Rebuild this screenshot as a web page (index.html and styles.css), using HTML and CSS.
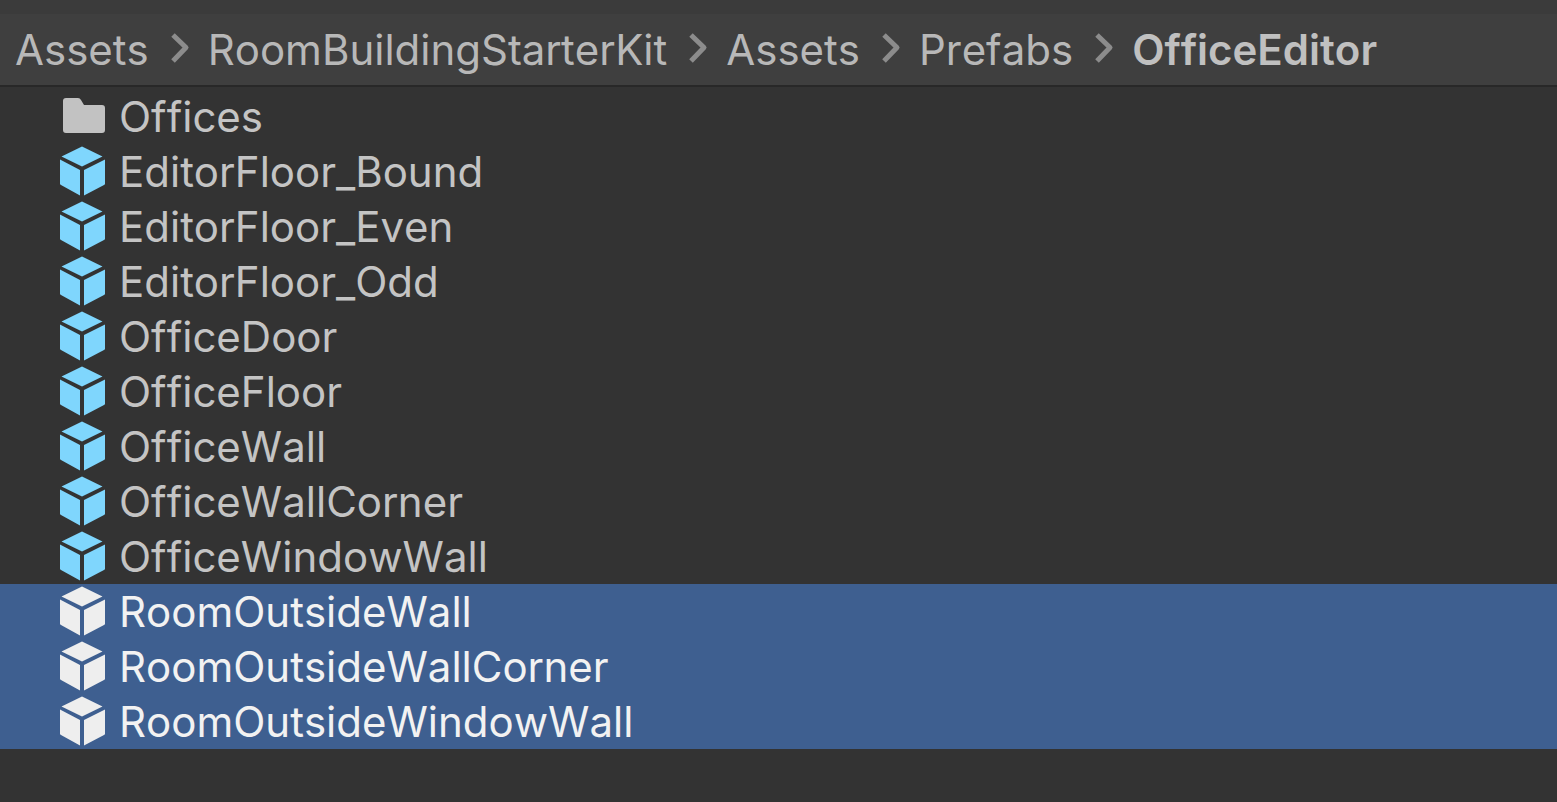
FILE: index.html
```html
<!DOCTYPE html>
<html lang="en">
<head>
<meta charset="utf-8">
<title>OfficeEditor</title>
<link rel="stylesheet" href="styles.css">
</head>
<body>
<svg class="defs" aria-hidden="true">
  <symbol id="cube" viewBox="0 0 48 55">
    <path d="M23 2.500L43.500 12.500L23 22.500L2.500 12.500Z M1 15.500L21 26V51.500L2 41Q1 40.500 1 39.500Z M46 15.500L25 26V51.500L45 41Q46 40.500 46 39.500Z"/>
  </symbol>
  <symbol id="folder" viewBox="0 0 48 55">
    <path d="M4 12Q4 9 7 9H19Q21 9 22 11L25 16H43Q46 16 46 19V41Q46 44 43 44H7Q4 44 4 41Z"/>
  </symbol>
  <symbol id="chevron" viewBox="0 0 20 34">
    <path d="M2 4L15 16.500L2 30" fill="none" stroke="currentColor" stroke-width="5" stroke-linejoin="round"/>
  </symbol>
</svg>
<nav class="breadcrumb" aria-label="Folder path">
  <a href="#">Assets</a><svg class="chevron"><use href="#chevron"/></svg>
  <a href="#">RoomBuildingStarterKit</a><svg class="chevron"><use href="#chevron"/></svg>
  <a href="#">Assets</a><svg class="chevron"><use href="#chevron"/></svg>
  <a href="#">Prefabs</a><svg class="chevron"><use href="#chevron"/></svg>
  <a href="#" class="current" aria-current="page">OfficeEditor</a>
</nav>
<ul class="files">
  <li class="row"><svg class="icon folder"><use href="#folder"/></svg>Offices</li>
  <li class="row"><svg class="icon"><use href="#cube"/></svg>EditorFloor_Bound</li>
  <li class="row"><svg class="icon"><use href="#cube"/></svg>EditorFloor_Even</li>
  <li class="row"><svg class="icon"><use href="#cube"/></svg>EditorFloor_Odd</li>
  <li class="row"><svg class="icon"><use href="#cube"/></svg>OfficeDoor</li>
  <li class="row"><svg class="icon"><use href="#cube"/></svg>OfficeFloor</li>
  <li class="row"><svg class="icon"><use href="#cube"/></svg>OfficeWall</li>
  <li class="row"><svg class="icon"><use href="#cube"/></svg>OfficeWallCorner</li>
  <li class="row"><svg class="icon"><use href="#cube"/></svg>OfficeWindowWall</li>
  <li class="row selected"><svg class="icon"><use href="#cube"/></svg>RoomOutsideWall</li>
  <li class="row selected"><svg class="icon"><use href="#cube"/></svg>RoomOutsideWallCorner</li>
  <li class="row selected"><svg class="icon"><use href="#cube"/></svg>RoomOutsideWindowWall</li>
</ul>
</body>
</html>
```

FILE: styles.css
```css
* {
  box-sizing: border-box;
}

body {
  margin: 0;
  min-height: 100vh;
  background: #333333;
  color: #c4c4c4;
  font-family: Inter, "Liberation Sans", sans-serif;
  font-size: 42px;
  font-kerning: none;
}

.defs {
  position: absolute;
  width: 0;
  height: 0;
}

.breadcrumb {
  display: flex;
  align-items: center;
  height: 87px;
  border-top: 14px solid #3b3b3b;
  padding: 0 15px;
  background: #3f3f3f;
  border-bottom: 2px solid #282828;
  white-space: nowrap;
}

.breadcrumb a {
  color: #b8b8b8;
  text-decoration: none;
}

.breadcrumb .current {
  color: #c0c0c0;
  font-weight: 600;
}

.chevron {
  flex: none;
  width: 20px;
  height: 34px;
  margin: 0 17px 4px 22px;
  color: #8c8c8c;
}

.files {
  margin: 0;
  padding: 2px 0 0;
  list-style: none;
}

.row {
  display: flex;
  align-items: center;
  gap: 12px;
  height: 55px;
  padding-left: 59px;
  white-space: nowrap;
}

.icon {
  flex: none;
  width: 48px;
  height: 55px;
  fill: #7fd6fd;
}

.folder {
  fill: #c2c2c2;
}

.selected {
  background: #3e5f90;
  color: #f2f2f2;
}

.selected .icon {
  fill: #eeeeee;
}
```
